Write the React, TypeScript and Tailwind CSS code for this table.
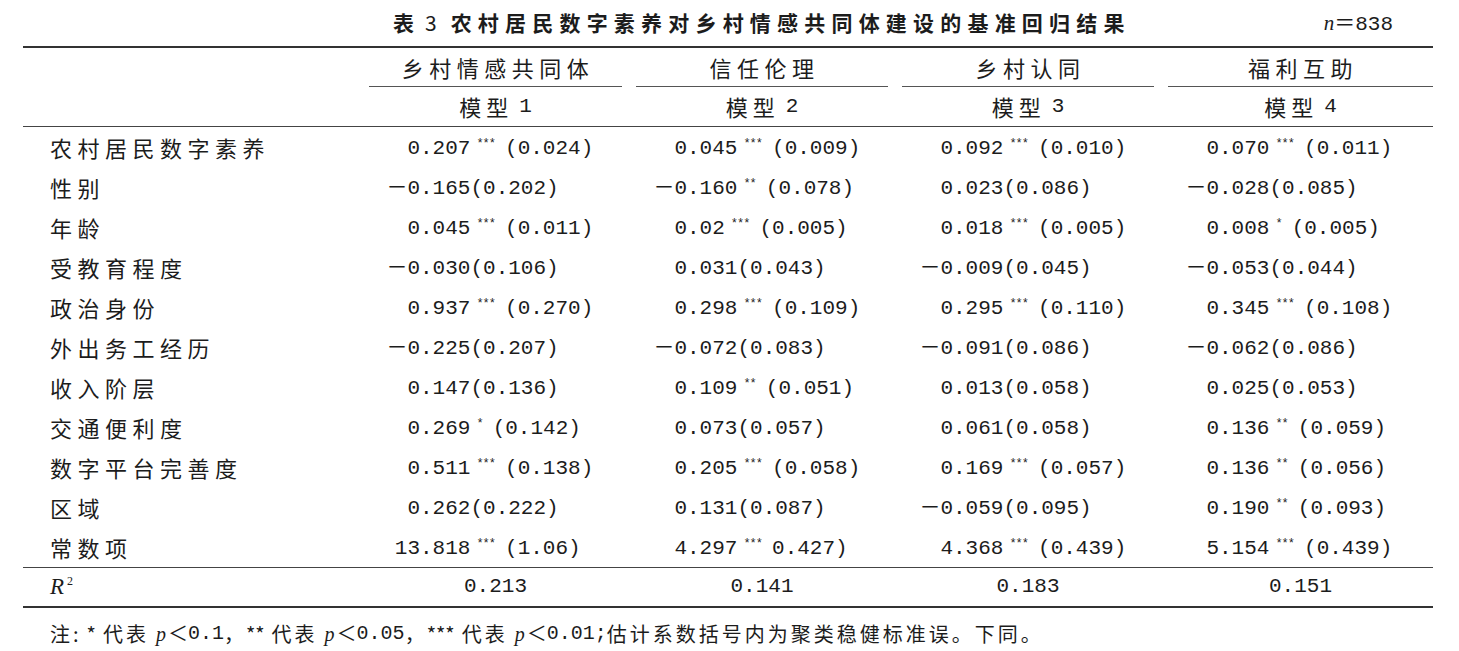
import React from 'react';

type Cell = [string, string, string];

const cjk = "font-['Noto_Sans_CJK_SC',sans-serif]";
const mono = "font-['Liberation_Mono','Noto_Sans_CJK_SC',monospace]";
const serif = "font-['Liberation_Serif','Noto_Sans_CJK_SC',serif]";

const groups = ['乡村情感共同体', '信任伦理', '乡村认同', '福利互助'];

const rows: [string, Cell[]][] = [
    ['农村居民数字素养', [['0.207', '***', '(0.024)'], ['0.045', '***', '(0.009)'], ['0.092', '***', '(0.010)'], ['0.070', '***', '(0.011)']]],
    ['性别', [['-0.165', '', '(0.202)'], ['-0.160', '**', '(0.078)'], ['0.023', '', '(0.086)'], ['-0.028', '', '(0.085)']]],
    ['年龄', [['0.045', '***', '(0.011)'], ['0.02', '***', '(0.005)'], ['0.018', '***', '(0.005)'], ['0.008', '*', '(0.005)']]],
    ['受教育程度', [['-0.030', '', '(0.106)'], ['0.031', '', '(0.043)'], ['-0.009', '', '(0.045)'], ['-0.053', '', '(0.044)']]],
    ['政治身份', [['0.937', '***', '(0.270)'], ['0.298', '***', '(0.109)'], ['0.295', '***', '(0.110)'], ['0.345', '***', '(0.108)']]],
    ['外出务工经历', [['-0.225', '', '(0.207)'], ['-0.072', '', '(0.083)'], ['-0.091', '', '(0.086)'], ['-0.062', '', '(0.086)']]],
    ['收入阶层', [['0.147', '', '(0.136)'], ['0.109', '**', '(0.051)'], ['0.013', '', '(0.058)'], ['0.025', '', '(0.053)']]],
    ['交通便利度', [['0.269', '*', '(0.142)'], ['0.073', '', '(0.057)'], ['0.061', '', '(0.058)'], ['0.136', '**', '(0.059)']]],
    ['数字平台完善度', [['0.511', '***', '(0.138)'], ['0.205', '***', '(0.058)'], ['0.169', '***', '(0.057)'], ['0.136', '**', '(0.056)']]],
    ['区域', [['0.262', '', '(0.222)'], ['0.131', '', '(0.087)'], ['-0.059', '', '(0.095)'], ['0.190', '**', '(0.093)']]],
    ['常数项', [['13.818', '***', '(1.06)'], ['4.297', '***', '0.427)'], ['4.368', '***', '(0.439)'], ['5.154', '***', '(0.439)']]],
];

const r2 = ['0.213', '0.141', '0.183', '0.151'];

function Value({cell}: {cell: Cell}) {
    const [coef, stars, se] = cell;
    const neg = coef.startsWith('-');
    const abs = neg ? coef.slice(1) : coef;
    const dot = abs.indexOf('.');
    const intPart = abs.slice(0, dot);
    const frac = abs.slice(dot);
    return (
        <div className={`flex items-baseline pl-[22px] text-[21px] ${mono}`}>
            {/* cjk family on the box keeps the same line box with or without the minus */}
            <span className={`inline-block w-[36px] text-right whitespace-nowrap ${cjk}`}>
                {neg && '－'}
                <span className={mono}>{intPart}</span>
            </span>
            <span>{frac}</span>
            {stars && <span className="relative -top-[7px] ml-[6px] mr-[10px] text-[12px] tracking-[-1px]">{stars}</span>}
            <span>{se}</span>
        </div>
    );
}

function P({v}: {v: string}) {
    return (
        <>
            <span className={`${serif} italic ml-[7px]`}>p</span>
            <span className={`${serif} ml-[2px]`}>＜</span>
            <span className={`${mono} text-[20px]`}>{v}</span>
        </>
    );
}

export default function App() {
    return (
        <div className="w-[1459px] h-[651px] overflow-hidden bg-white text-[#1c1c1c] pl-[23px] pr-[26px]">
            {/* Caption */}
            <div className="h-[46px] flex items-center">
                <div className={`ml-[370px] flex items-center text-[21px] font-bold ${cjk}`}>
                    <span>表</span>
                    <span className="ml-[11px] font-normal">3</span>
                    <span className="ml-[14px] tracking-[6.2px]">农村居民数字素养对乡村情感共同体建设的基准回归结果</span>
                </div>
                <div className="ml-auto mr-[40px] flex items-baseline text-[21px]">
                    <span className={`${serif} italic`}>n</span>
                    <span className={cjk}>＝</span>
                    <span className={mono}>838</span>
                </div>
            </div>

            <div className="border-t-2 border-[#333]"/>

            {/* Header */}
            <div className={`grid grid-cols-[339px_267px_266px_266px_272px] ${cjk} text-[22px]`}>
                <div/>
                {groups.map((g, i) => (
                    <div key={g} className={i === 3 ? 'ml-[7px]' : 'mx-[7px]'}>
                        <div className="h-[39px] flex items-center justify-center pl-[5px] tracking-[5.5px] border-b-[1.5px] border-[#555]">
                            {g}
                        </div>
                        <div className="h-[39px] flex items-center justify-center">
                            <span className="tracking-[5px]">模型</span>
                            <span className={`${mono} text-[21px] ml-[6px]`}>{i + 1}</span>
                        </div>
                    </div>
                ))}
            </div>

            <div className="border-t-[1.5px] border-[#444]"/>

            {/* Body */}
            {rows.map(([label, cells]) => (
                <div key={label} className="grid grid-cols-[339px_267px_266px_266px_272px] h-10 items-center">
                    <div className={`pl-[27px] text-[22px] tracking-[5.5px] ${cjk}`}>{label}</div>
                    {cells.map((c, i) => (
                        <Value key={i} cell={c}/>
                    ))}
                </div>
            ))}

            <div className="border-t-[1.5px] border-[#444]"/>

            <div className="grid grid-cols-[339px_267px_266px_266px_272px] h-[38px] items-center">
                <div className={`pl-[27px] text-[23px] ${serif} italic`}>
                    R<span className="relative -top-[9px] ml-[3px] text-[12px] not-italic">2</span>
                </div>
                {r2.map((v, i) => (
                    <div key={v} className={`text-center text-[21px] ${mono} ${i === 3 ? 'pl-[7px]' : 'px-[7px]'}`}>{v}</div>
                ))}
            </div>

            <div className="border-t-2 border-[#333]"/>

            {/* Note */}
            <div className={`h-[52px] flex items-center pl-[27px] text-[20px] ${cjk}`}>
                <span>注</span>
                <span className="ml-[3px]">:</span>
                <span className="ml-[8px]">*</span>
                <span className="ml-[7px] tracking-[3px]">代表</span>
                <P v="0.1"/>
                <span>，</span>
                <span className="ml-[2px]">**</span>
                <span className="ml-[7px] tracking-[3px]">代表</span>
                <P v="0.05"/>
                <span>，</span>
                <span className="ml-[2px]">***</span>
                <span className="ml-[7px] tracking-[3px]">代表</span>
                <P v="0.01"/>
                <span className={mono}>;</span>
                <span className="tracking-[3px]">估计系数括号内为聚类稳健标准误。下同。</span>
            </div>
        </div>
    );
}
